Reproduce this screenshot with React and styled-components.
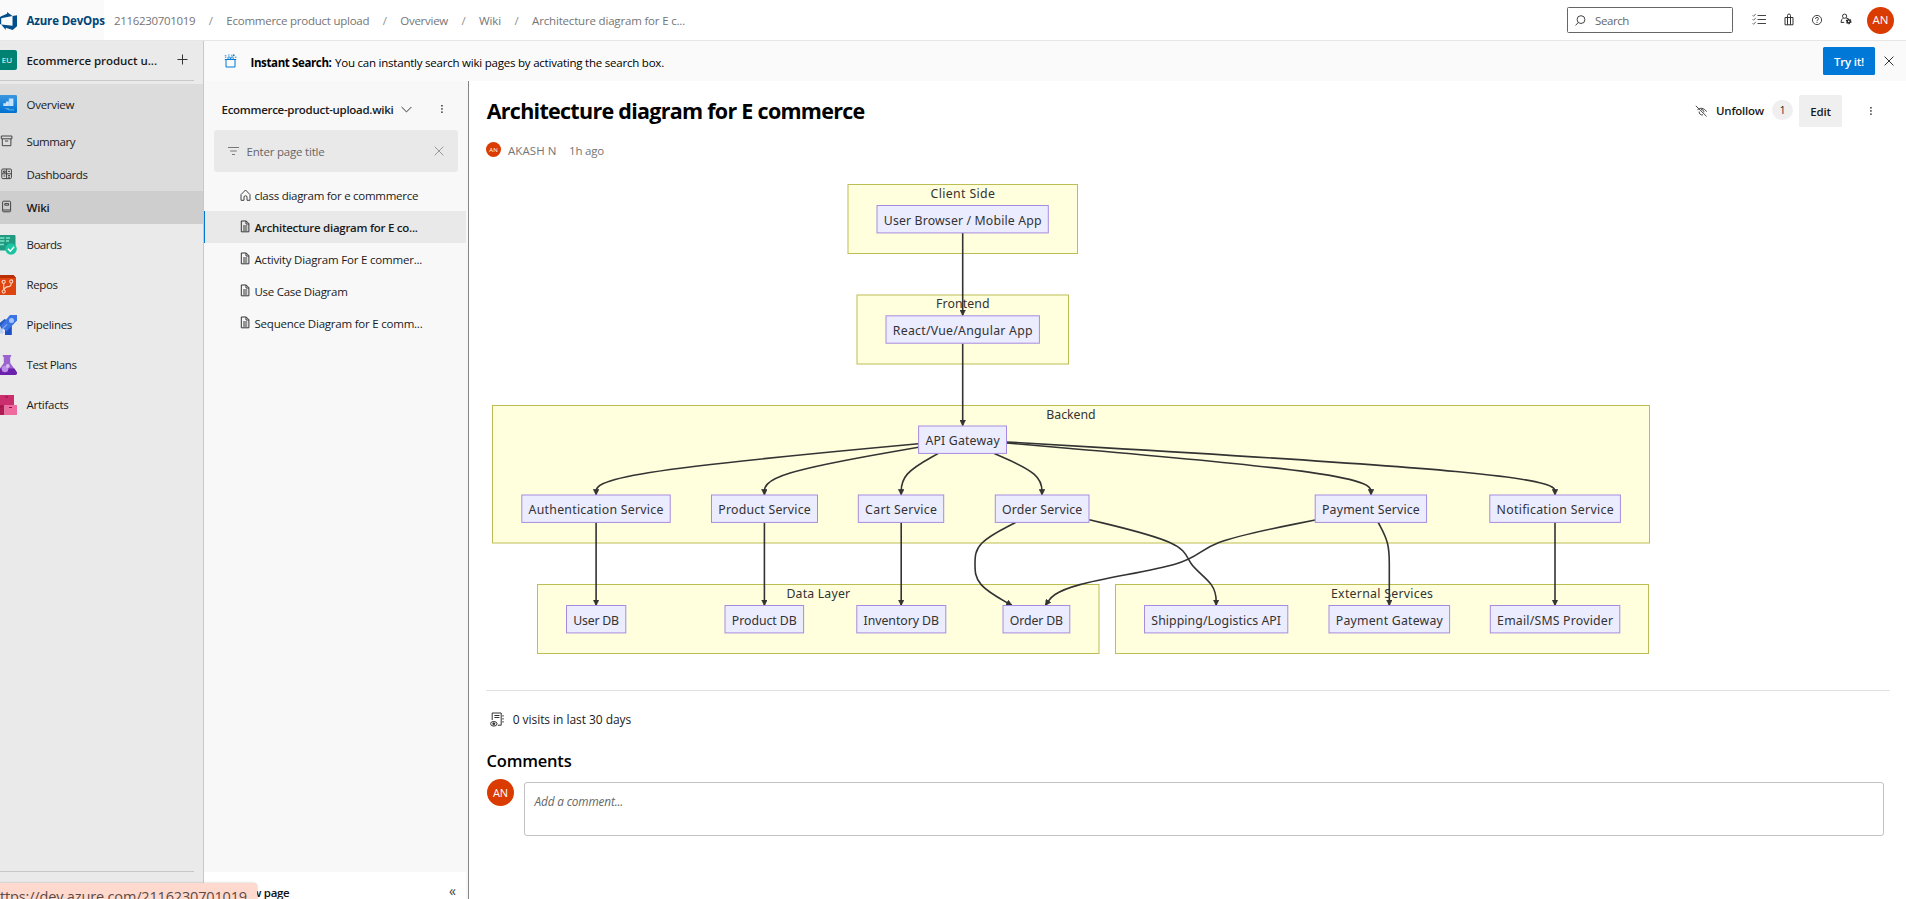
import React from "react";
import styled, { createGlobalStyle } from "styled-components";

const GlobalStyle = createGlobalStyle`
  * { box-sizing: border-box; }
  body {
    margin: 0;
    overflow: hidden;
    background: #fff;
    color: #1a1a1a;
    font-family: "Open Sans", "Noto Sans", sans-serif;
    font-size: 11.5px;
    line-height: 16px;
  }
  svg { display: block; flex: none; }
`;

const Page = styled.div`
  display: flex;
  flex-direction: column;
  width: 1906px;
  height: 899px;
  overflow: hidden;
  position: relative;
`;

const Label = styled.span`
  white-space: nowrap;
  letter-spacing: ${(p) => p.$ls ?? -0.28}px;
  font-weight: ${(p) => p.$weight ?? 400};
`;

/* ---------- top bar ---------- */
const TopBar = styled.header`
  display: flex;
  align-items: center;
  height: 41px;
  flex: none;
  border-bottom: 1px solid #e6e6e6;
`;

const Brand = styled.div`
  display: flex;
  align-items: center;
  gap: 10px;
  width: 104px;
  height: 40px;
  margin-right: 10px;
  padding-top: 1px;
  background: #fafafa;
  color: #004578;
  svg { margin-left: -1.5px; }
`;

const Crumbs = styled.nav`
  display: flex;
  align-items: center;
  padding-top: 1px;
  color: #757575;
`;

const Slash = styled.span`
  width: 31px;
  text-align: center;
  color: #8f8f8f;
`;

const SearchBox = styled.div`
  display: flex;
  align-items: center;
  gap: 9px;
  width: 166px;
  height: 26px;
  margin-left: auto;
  padding: 1px 0 0 7px;
  border: 1px solid #666;
  border-radius: 1.5px;
  color: #666;
`;

const Tools = styled.div`
  display: flex;
  align-items: center;
  justify-content: space-between;
  width: 101px;
  margin: 0 14px 0 19px;
  padding-bottom: 1px;
`;

const Avatar = styled.span`
  display: flex;
  align-items: center;
  justify-content: center;
  flex: none;
  width: ${(p) => p.$size}px;
  height: ${(p) => p.$size}px;
  border-radius: 50%;
  background: #da3b01;
  color: #fff;
  font-size: ${(p) => p.$font}px;
  line-height: 1;
`;

const TopAvatar = styled(Avatar)`
  margin-right: 12px;
`;

/* ---------- sidebar ---------- */
const Body = styled.div`
  display: flex;
  flex: 1;
  min-height: 0;
`;

const Sidebar = styled.aside`
  display: flex;
  flex-direction: column;
  width: 204px;
  flex: none;
  background: #eaeaea;
  border-right: 1px solid #c8c8c8;
`;

const Project = styled.div`
  display: flex;
  align-items: center;
  height: 40px;
  margin-right: 9px;
  border-bottom: 1px solid #c8c8c8;
  flex: none;
  svg { margin: -2px 6px 0 auto; }
`;

const ProjectBadge = styled.span`
  display: flex;
  align-items: center;
  justify-content: center;
  width: 17px;
  height: 20px;
  margin-right: 9.5px;
  margin-top: -1px;
  padding-right: 3px;
  border-radius: 0 2px 2px 0;
  background: #008272;
  color: #fff;
  font-size: 8px;
`;

const NavGroup = styled.div`
  margin-top: 3px;
  margin-bottom: 1px;
  background: #dcdcdc;
`;

const NavItem = styled.div`
  display: flex;
  align-items: center;
  height: ${(p) => p.$height ?? 40}px;
  background: ${(p) => (p.$selected ? "#cecece" : "transparent")};
`;

const NavIcon = styled.span`
  width: 26.5px;
  flex: none;
  svg { margin: ${(p) => (p.$small ? "-2px 0 0 0" : "-1px 0 0 -3px")}; }
`;

const SidebarEnd = styled.div`
  height: 28px;
  margin: auto 9px 0 0;
  border-top: 1px solid #c8c8c8;
`;

/* ---------- right side ---------- */
const Workspace = styled.div`
  display: flex;
  flex-direction: column;
  flex: 1;
  min-width: 0;
`;

const Banner = styled.div`
  display: flex;
  align-items: center;
  height: 40px;
  flex: none;
  padding: 0 12px 0 20px;
  background: #fafafa;
  color: #000;
`;

const BannerText = styled.div`
  display: flex;
  gap: 3.5px;
  margin-left: 13.5px;
  padding-top: 3px;
`;

const TryButton = styled.button`
  width: 52px;
  height: 28px;
  margin: 0 9px 0 auto;
  padding: 1px 0 0;
  border: 0;
  border-radius: 1.5px;
  background: #0078d7;
  color: #fff;
  font: 600 11.5px "Open Sans", sans-serif;
  letter-spacing: -0.2px;
`;

const Columns = styled.div`
  display: flex;
  flex: 1;
  min-height: 0;
`;

const WikiNav = styled.section`
  display: flex;
  flex-direction: column;
  width: 265px;
  flex: none;
  background: #f8f8f8;
  border-right: 1px solid #858585;
`;

const WikiHead = styled.div`
  display: flex;
  align-items: center;
  height: 49px;
  padding: 8px 24px 0 17.5px;
  svg:first-of-type { margin-left: 8px; }
  svg:last-of-type { margin-left: auto; margin-top: -1px; }
`;

const Filter = styled.div`
  display: flex;
  align-items: center;
  height: 42px;
  margin: 0 10px 7px;
  padding: 0 14px;
  border-radius: 3px;
  background: #e9e9e9;
  color: #666;
  span { margin: 1px 0 0 7.5px; }
  svg { margin-top: -1px; }
  svg:last-child { margin-left: auto; }
`;

const TreeRow = styled.div`
  display: flex;
  align-items: center;
  gap: ${(p) => p.$gap}px;
  height: 32px;
  margin-right: 2px;
  padding: 2px 0 0 34.5px;
  border-left: 1px solid ${(p) => (p.$selected ? "#0078d4" : "transparent")};
  background: ${(p) => (p.$selected ? "#e9e9e9" : "transparent")};
  svg { margin-top: -3px; }
`;

const NewPage = styled.div`
  display: flex;
  align-items: center;
  justify-content: space-between;
  height: 27px;
  margin: auto 2px 0 0;
  padding: 14px 10px 0 33px;
  background: #fff;
  color: #111;
`;

const Collapse = styled.span`
  margin-top: -4px;
  color: #444;
  font-size: 14px;
`;

/* ---------- article ---------- */
const Article = styled.main`
  flex: 1;
  min-width: 0;
  padding: 14px 16px 0 17px;
`;

const TitleRow = styled.div`
  display: flex;
  align-items: center;
  height: 32px;
`;

const Title = styled.h1`
  margin: 0 0 0 0.7px;
  color: #000;
  font-size: 21.5px;
  line-height: 30px;
  letter-spacing: -0.72px;
  white-space: nowrap;
`;

const Actions = styled.div`
  display: flex;
  align-items: center;
  margin-left: auto;
  padding-right: 17px;
`;

const Count = styled.span`
  width: 21px;
  height: 20px;
  margin: -2px 6px 0 8px;
  border-radius: 10px;
  background: #efefef;
  font-size: 10px;
  line-height: 20px;
  text-align: center;
`;

const EditButton = styled.button`
  width: 43px;
  height: 32px;
  margin-right: 27px;
  padding: 0;
  border: 0;
  border-radius: 1.5px;
  background: #efefef;
  color: #1a1a1a;
  font: 600 11.5px "Open Sans", sans-serif;
  letter-spacing: -0.2px;
`;

const FollowButton = styled.div`
  display: flex;
  align-items: center;
  gap: 8px;
`;

const Byline = styled.div`
  display: flex;
  height: 16px;
  margin: 16px 0 21px;
  color: #757575;
`;

const BylineAvatar = styled(Avatar)`
  margin: -1px 7px 0 0;
`;

const BylineAge = styled(Label)`
  margin-left: 12.5px;
`;

const Visits = styled.div`
  display: flex;
  align-items: center;
  gap: 8.7px;
  height: 59px;
  margin: 20px 0 0;
  padding: 0 0 1px 4px;
  border-top: 1px solid #e2e2e2;
  font-size: 12px;
`;

const CommentsTitle = styled.h2`
  margin: 1px 0 7px 0.5px;
  color: #000;
  font-size: 16.5px;
  font-weight: 600;
  line-height: 22px;
  letter-spacing: -0.2px;
`;

const CommentRow = styled.div`
  display: flex;
  align-items: flex-start;
  gap: 10px;
  padding-left: 1px;
`;

const CommentBox = styled.div`
  flex: 1;
  height: 54px;
  margin: 3px 6px 0 0;
  padding: 10px 9.5px;
  border: 1px solid #c2c2c2;
  border-radius: 3px;
  color: #666;
  font-size: 11.8px;
  font-style: italic;
`;

const LinkTip = styled.div`
  position: absolute;
  left: 0;
  bottom: -8px;
  width: 257px;
  height: 24px;
  border-top-right-radius: 4px;
  background: #ffd9cd;
  color: #5c4a45;
  font-size: 14.5px;
  line-height: 27px;
  letter-spacing: -0.16px;
  white-space: nowrap;
  box-shadow: 0 0 2px rgba(0, 0, 0, 0.3);
`;

/* ---------- diagram ---------- */
const Canvas = styled.svg`
  rect { stroke-width: 1; }
  text {
    fill: #333;
    font: 12.3px "Noto Sans", "Open Sans", sans-serif;
    text-anchor: middle;
  }
`;
const ClusterRect = styled.rect`
  fill: #ffffde;
  stroke: #bdbd55;
`;
const NodeRect = styled.rect`
  fill: #ececff;
  stroke: #a78be0;
`;
const Edge = styled.path`
  fill: none;
  stroke: #333;
  stroke-width: 1.6;
`;

const clusters = [
  ["Client Side", 848, 1077.5, 184.5, 253.5, 64.5],
  ["Frontend", 857, 1068.5, 295, 364, 53.5],
  ["Backend", 492.5, 1649.5, 405.5, 543, 49.4],
  ["Data Layer", 537.5, 1099, 584.5, 653.5, 63.7],
  ["External Services", 1115.5, 1648.5, 584.5, 653.5, 102],
];

const nodes = [
  ["User Browser / Mobile App", 877, 1048.3, 205.5],
  ["React/Vue/Angular App", 886, 1039.4, 315.8],
  ["API Gateway", 918.6, 1006.5, 426],
  ["Authentication Service", 521.8, 670.2, 495],
  ["Product Service", 711.5, 817.5, 495],
  ["Cart Service", 858.3, 943.7, 495],
  ["Order Service", 995.3, 1089, 495],
  ["Payment Service", 1315.2, 1426.6, 495],
  ["Notification Service", 1489.8, 1620.4, 495],
  ["User DB", 566.5, 625.8, 605.5],
  ["Product DB", 725, 803.6, 605.5],
  ["Inventory DB", 856.8, 945.8, 605.5],
  ["Order DB", 1003, 1069.8, 605.5],
  ["Shipping/Logistics API", 1144.5, 1287.8, 605.5],
  ["Payment Gateway", 1329, 1449.6, 605.5],
  ["Email/SMS Provider", 1490.3, 1619.8, 605.5],
];

const edges = [
  [[962.7, 233], [962.7, 315.3]],
  [[962.7, 343.5], [962.7, 425.5]],
  [[918.4, 443.7], [596.1, 474.1], [596.1, 494.8]],
  [[918.4, 447.3], [764.4, 474.1], [764.4, 494.8]],
  [[938, 453.6], [901.2, 474.1], [901.2, 494.8]],
  [[994.3, 453.6], [1042, 474.1], [1042, 494.8]],
  [[1006.5, 443], [1371, 474.1], [1371, 494.8]],
  [[1006.5, 442], [1555, 474.1], [1555, 494.8]],
  [[596.1, 522.5], [596.1, 605.3]],
  [[764.4, 522.5], [764.4, 605.3]],
  [[901.2, 522.5], [901.2, 605.3]],
  [[1015.5, 522.5], [975, 543.2], [975, 564], [975, 584.6], [1011.8, 605.3]],
  [[1089.3, 519.7], [1186.5, 543.2], [1186.5, 564], [1216.2, 584.6], [1216.2, 605.3]],
  [[1315.2, 520], [1199, 543.2], [1199, 564], [1058.8, 584.6], [1045.5, 605.3]],
  [[1378.2, 522.5], [1389.3, 543.2], [1389.3, 564], [1389.3, 584.6], [1389.3, 605.3]],
  [[1555, 522.5], [1555, 605.3]],
];

/* Uniform B-spline through the control points, with straight end segments. */
function spline(points) {
  const end = points[points.length - 1];
  if (points.length < 3) return `M${points[0]}L${end}`;
  const mix = (a, b, wa, wb) => [0, 1].map((i) => (a[i] * wa + b[i] * wb) / (wa + wb));
  const knot = (a, b, c) => [0, 1].map((i) => (a[i] + 4 * b[i] + c[i]) / 6);
  let d = `M${points[0]}L${mix(points[0], points[1], 5, 1)}`;
  for (let i = 1; i < points.length; i += 1) {
    const a = points[i - 1];
    const b = points[i];
    const c = points[i + 1] || b;
    d += `C${mix(a, b, 2, 1)} ${mix(a, b, 1, 2)} ${knot(a, b, c)}`;
  }
  return `${d}L${end}`;
}

const Diagram = () => (
  <Canvas width="1170" height="490" viewBox="486 180 1170 490">
    <defs>
      <marker id="arrow" viewBox="0 0 6 6" refX="5.6" refY="3" markerWidth="6" markerHeight="6" markerUnits="userSpaceOnUse" orient="auto">
        <path d="M0 0 6 3 0 6z" fill="#333" stroke="#333" strokeWidth=".4" />
      </marker>
    </defs>
    {clusters.map(([name, x1, x2, y1, y2, w]) => (
      <g key={name}>
        <ClusterRect x={x1} y={y1} width={x2 - x1} height={y2 - y1} />
        <text x={(x1 + x2) / 2} y={y1 + 13.2} textLength={w}>{name}</text>
      </g>
    ))}
    {edges.map((points, i) => (
      <Edge key={i} d={spline(points)} markerEnd="url(#arrow)" />
    ))}
    {nodes.map(([name, x1, x2, y]) => (
      <g key={name}>
        <NodeRect x={x1} y={y} width={x2 - x1} height="27.4" />
        <text x={(x1 + x2) / 2} y={y + 19.4} textLength={x2 - x1 - 13.6}>{name}</text>
      </g>
    ))}
  </Canvas>
);

/* ---------- icons ---------- */
const Icon = ({ w = 12, h = w, box = `0 0 ${w} ${h}`, color = "#333", sw = 1, children }) => (
  <svg width={w} height={h} viewBox={box} fill="none" stroke={color} strokeWidth={sw}>{children}</svg>
);

const Logo = () => (
  <svg width="18" height="18" viewBox="0 0 24 24" fill="#004e8c">
    <path d="M0 8.877L2.247 5.91l8.405-3.416V.022l7.37 5.393L2.966 8.338v8.225L0 15.707zm24-4.45v14.651l-5.753 4.9-9.303-3.057v3.056l-5.978-7.416 15.057 1.798V5.415z" />
  </svg>
);
const SearchIcon = () => <Icon w={11} color="#444"><circle cx="6" cy="4.6" r="3.9" /><path d="M8.7 7.5l1.9 2.9" stroke="none" /><path d="M3.2 7.5.6 10.4" /></Icon>;
const ListIcon = () => (
  <Icon w={15} h={13} color="#444"><path d="M5.5 2.5H14M5.5 6.5H14M5.5 10.5H14" /><path d="M.6 2.3l1 1L3.8.8M.6 6.3l1 1 2.2-2.5M.6 10.3l1 1 2.2-2.5" strokeWidth=".8" /></Icon>
);
const BagIcon = () => <Icon w={10} h={13}><path d="M1 4.5h8v7.3H1zM3.5 4.5V2.5Q3.5 1 5 1t1.5 1.5v2M3.5 4.5v7.3M6.5 4.5v7.3" /></Icon>;
const HelpIcon = () => <Icon w={12} sw={0.9}><circle cx="6" cy="6" r="4.6" /><path d="M4.5 4.9q0-1.5 1.5-1.5t1.5 1.3Q7.5 5.6 6 6.5v.7M6 8v1" /></Icon>;
const UserGearIcon = () => (
  <Icon w={13}><circle cx="4.6" cy="3.2" r="2.1" /><path d="M3.2 5.2Q1 6.4 1 9.4h3.2M6.2 5l1.8.6" /><circle cx="8.7" cy="8.4" r="2.1" fill="#222" stroke="#222" strokeDasharray="1.2 .8" strokeWidth="1.6" /><circle cx="8.7" cy="8.4" r=".8" fill="#fff" stroke="none" /></Icon>
);
const PlusIcon = () => <Icon w={11}><path d="M5.5.5v10M.5 5.5h10" /></Icon>;
const CloseIcon = ({ w = 10, color = "#333" }) => <Icon w={w} box="0 0 10 10" color={color}><path d="M.6.6l8.8 8.8M9.4.6L.6 9.4" /></Icon>;
const ChevronIcon = () => <Icon w={11} h={7}><path d="M.6 1l4.9 4.9L10.4 1" /></Icon>;
const DotsIcon = () => <Icon w={4} h={10} color="none"><g fill="#333"><rect x="1.2" y="1" width="1.5" height="1.5" /><rect x="1.2" y="4.2" width="1.5" height="1.5" /><rect x="1.2" y="7.4" width="1.5" height="1.5" /></g></Icon>;
const FilterIcon = () => <Icon w={11} h={10} color="#777"><path d="M0 1.5h11M2.2 5h6.6M4 8.5h3" /></Icon>;
const HomeIcon = () => <Icon w={11} h={12} color="#444"><path d="M1 5.6 5.5 1 10 5.6v5.7H7V8Q7 6.8 5.5 6.8T4 8v3.3H1z" /></Icon>;
const PageIcon = () => <Icon w={10} h={13} color="#333"><path d="M1.3 1h5l2.6 2.7V11.8H1.3zM6 1v3h3M3 6h4.3M3 8h4.3M3 10h4.3" /></Icon>;
const GiftIcon = () => (
  <Icon w={13} h={15} color="#0078d4"><path d="M.8 5.5h11.4M2 5.5v7.5h9V5.5" /><path d="M4 5.2Q3.4 2.8 5 2.8T6.5 5.2Q6.6 2.8 8.2 2.8T9 5.2M.8 1.8h1.6M1.2 3.4h.9M4.2 1h1.3M7.2 1.2h1M9.6.3v2M8.7 1.3h2M11 3.2h1.4" strokeWidth=".9" /></Icon>
);
const UnfollowIcon = () => (
  <Icon w={13} h={12} sw={0.9}><path d="M.8.8l10.8 10.6M2.4 4.8Q6.8.8 11.8 6.6M4.2 6.5a2.9 2.9 0 0 0 3.8 3.3M6 4.6a2.4 2.4 0 0 1 2.8 2.8" /></Icon>
);
const VisitsIcon = () => (
  <Icon w={14} h={15}><path d="M2.2 8V1h9v12.2H7.8M4.4 3.5h5M4.4 5.5h5M13 3v1.6M13 6v1.6M13 9v1.6" /><ellipse cx="3.8" cy="11.8" rx="3.2" ry="2.3" /><circle cx="3.8" cy="11.8" r="1" fill="#222" /></Icon>
);
const SummaryIcon = () => <Icon w={13} h={12} color="#444"><path d="M1.3 1h10.6v2.8H1.3zM2.3 3.8v6.9h8.6V3.8M5 6h3.2" /></Icon>;
const DashboardsIcon = () => <Icon w={13} h={12} color="#444"><rect x="1.8" y="1" width="9.6" height="9.6" rx="1" /><path d="M6.6 1v9.6M2 5.8h9.4M3.5 3h1.8v1.4H3.5zM8 3.4h2M8 7.6h2M3.5 8h1.8M8 9.2h2" /></Icon>;
const WikiIcon = () => <Icon w={13} h={13} color="#444"><rect x="2.6" y="1.2" width="8" height="10.6" rx="1" /><path d="M4.8 3.6h3.8v1.6H4.8zM2.6 10h8" /></Icon>;

const OverviewIcon = () => (
  <svg width="20" height="18" viewBox="0 0 20 18">
    <defs><linearGradient id="ov" x1="0" y1="0" x2="0" y2="1"><stop stopColor="#3a96e0" /><stop offset="1" stopColor="#0072d0" /></linearGradient></defs>
    <rect width="20" height="18" rx="1.2" fill="url(#ov)" />
    <path d="M6.3 11V8.2H9V6.4h3V3.4h4.4V11z" fill="#c5e3fa" /><path d="M12 3.4V11" stroke="#8fc6f2" strokeWidth=".6" />
    <path d="M7 13h5v1.2h5v1.3h-5z" fill="#4fa8ea" />
  </svg>
);
const BoardsIcon = () => (
  <svg width="20" height="20" viewBox="0 0 20 20">
    <rect width="18.5" height="15.5" rx="1" fill="#209a80" />
    <path d="M3 3h4.5M9 3h4M3 6h4.5M9 6h3M3 9.5h4" stroke="#7fe3c8" strokeWidth="1.6" />
    <circle cx="14" cy="14" r="5.8" fill="#1cc5a1" />
    <path d="M11 13.8l2.3 2.4 3.8-4.4" fill="none" stroke="#fff" strokeWidth="1.5" />
  </svg>
);
const ReposIcon = () => (
  <svg width="20" height="20" viewBox="0 0 20 20">
    <path d="M2 0h14.5L19 3v17H2z" fill="#dd4410" /><path d="M2 0h14.5L19 3H2z" fill="#bb2f06" />
    <g fill="none" stroke="#ffd1bd" strokeWidth="1.1"><circle cx="6.7" cy="6.8" r="1.6" /><circle cx="14.2" cy="6.5" r="1.6" /><circle cx="6.7" cy="16.6" r="1.6" /><path d="M6.7 8.4V15M14.2 8.2q0 3.3-3 3.4T6.9 14.8" /></g>
  </svg>
);
const PipelinesIcon = () => (
  <svg width="20" height="20" viewBox="0 0 20 20">
    <path d="M2 8.5 7.5 4l4 2-7 8z" fill="#2659bd" /><path d="M8 14.5l6.8-5V20H8z" fill="#1b4fc2" />
    <path d="M13 0h7v5.5L9.5 16.5 3.5 11z" fill="#3c74e6" />
    <circle cx="14.5" cy="5.4" r="2.5" fill="#a8c4fb" />
    <path d="M4.5 14.8 10 9.3" stroke="#82a9f6" strokeWidth="1.2" /><path d="M3 13l4 4-2 2-2-1z" fill="#b9cff8" />
  </svg>
);
const TestPlansIcon = () => (
  <svg width="20" height="20" viewBox="0 0 20 20">
    <path d="M5.8 0h8.4v1.8h-1V8l6.6 9.3Q20.5 20 18 20H2Q-.5 20 .2 17.3L6.8 8V1.8h-1z" fill="#9a63ce" />
    <path d="M2.8 13.6h14.6l2.4 3.7Q20.5 20 18 20H2Q-.5 20 .2 17.3z" fill="#6a22ad" />
    <circle cx="8" cy="14" r="3.3" fill="#bd8ee6" /><circle cx="10.8" cy="11" r="1.9" fill="#d8b8f5" />
  </svg>
);
const ArtifactsIcon = () => (
  <svg width="20" height="20" viewBox="0 0 20 20">
    <path d="M3 0h14v10H3z" fill="#cb2e6d" /><path d="M0 10h7.5v10H0z" fill="#b01a55" /><path d="M7.5 10H20v10H7.5z" fill="#ee6ba0" />
    <path d="M8 2h3M3.5 12h2M12 12.5h3" stroke="#8d1242" strokeWidth="1.2" />
  </svg>
);

const areas = [
  ["Boards", BoardsIcon, -0.5],
  ["Repos", ReposIcon, -0.4],
  ["Pipelines", PipelinesIcon, -0.29],
  ["Test Plans", TestPlansIcon, -0.41],
  ["Artifacts", ArtifactsIcon, -0.25],
];

const crumbs = [
  ["2116230701019", -0.32],
  ["Ecommerce product upload", -0.25],
  ["Overview", -0.26],
  ["Wiki", -0.1],
  ["Architecture diagram for E c...", -0.18],
];

const pages = [
  ["class diagram for e commmerce", -0.27, HomeIcon],
  ["Architecture diagram for E co...", -0.27, PageIcon],
  ["Activity Diagram For E commer...", -0.19, PageIcon],
  ["Use Case Diagram", -0.28, PageIcon],
  ["Sequence Diagram for E comm...", -0.22, PageIcon],
];

export default function App() {
  return (
    <Page>
      <GlobalStyle />
      <TopBar>
        <Brand><Logo /><Label $weight={700} $ls={-0.16}>Azure DevOps</Label></Brand>
        <Crumbs>
          {crumbs.map(([name, ls], i) => (
            <React.Fragment key={name}>
              {i > 0 && <Slash>/</Slash>}
              <Label $ls={ls}>{name}</Label>
            </React.Fragment>
          ))}
        </Crumbs>
        <SearchBox><SearchIcon /><Label $ls={-0.4}>Search</Label></SearchBox>
        <Tools><ListIcon /><BagIcon /><HelpIcon /><UserGearIcon /></Tools>
        <TopAvatar $size={27} $font={11.5}>AN</TopAvatar>
      </TopBar>
      <Body>
        <Sidebar>
          <Project>
            <ProjectBadge>EU</ProjectBadge>
            <Label $weight={600} $ls={-0.05}>Ecommerce product u...</Label>
            <PlusIcon />
          </Project>
          <NavGroup>
            <NavItem $height={41}><NavIcon><OverviewIcon /></NavIcon><Label $weight={500} $ls={-0.27}>Overview</Label></NavItem>
            <NavItem $height={33}><NavIcon $small><SummaryIcon /></NavIcon><Label $ls={-0.42}>Summary</Label></NavItem>
            <NavItem $height={33}><NavIcon $small><DashboardsIcon /></NavIcon><Label $ls={-0.38}>Dashboards</Label></NavItem>
            <NavItem $height={33} $selected><NavIcon $small><WikiIcon /></NavIcon><Label $weight={600} $ls={-0.22}>Wiki</Label></NavItem>
          </NavGroup>
          {areas.map(([name, Glyph, ls]) => (
            <NavItem key={name}><NavIcon><Glyph /></NavIcon><Label $ls={ls}>{name}</Label></NavItem>
          ))}
          <SidebarEnd />
        </Sidebar>
        <Workspace>
          <Banner>
            <GiftIcon />
            <BannerText>
              <Label $weight={700} $ls={-0.375}>Instant Search:</Label>
              <Label $ls={-0.22}>You can instantly search wiki pages by activating the search box.</Label>
            </BannerText>
            <TryButton>Try it!</TryButton>
            <CloseIcon />
          </Banner>
          <Columns>
            <WikiNav>
              <WikiHead><Label $weight={600} $ls={-0.29}>Ecommerce-product-upload.wiki</Label><ChevronIcon /><DotsIcon /></WikiHead>
              <Filter><FilterIcon /><Label $ls={-0.2}>Enter page title</Label><CloseIcon color="#999" /></Filter>
              {pages.map(([name, ls, Glyph], i) => (
                <TreeRow key={name} $selected={i === 1} $gap={i === 0 ? 4 : 5}>
                  <Glyph /><Label $ls={ls} $weight={i === 1 ? 600 : 400}>{name}</Label>
                </TreeRow>
              ))}
              <NewPage><Label $weight={600} $ls={-0.3}>New page</Label><Collapse>«</Collapse></NewPage>
            </WikiNav>
            <Article>
              <TitleRow>
                <Title>Architecture diagram for E commerce</Title>
                <Actions>
                  <FollowButton><UnfollowIcon /><Label $weight={600} $ls={-0.23}>Unfollow</Label></FollowButton>
                  <Count>1</Count>
                  <EditButton>Edit</EditButton>
                  <DotsIcon />
                </Actions>
              </TitleRow>
              <Byline>
                <BylineAvatar $size={15} $font={6}>AN</BylineAvatar>
                <Label $ls={0.07}>AKASH N</Label>
                <BylineAge $ls={-0.2}>1h ago</BylineAge>
              </Byline>
              <Diagram />
              <Visits><VisitsIcon /><Label $ls={-0.05}>0 visits in last 30 days</Label></Visits>
              <CommentsTitle>Comments</CommentsTitle>
              <CommentRow>
                <Avatar $size={27} $font={11}>AN</Avatar>
                <CommentBox><Label $ls={-0.15}>Add a comment...</Label></CommentBox>
              </CommentRow>
            </Article>
          </Columns>
        </Workspace>
      </Body>
      <LinkTip>ttps://dev.azure.com/2116230701019</LinkTip>
    </Page>
  );
}
